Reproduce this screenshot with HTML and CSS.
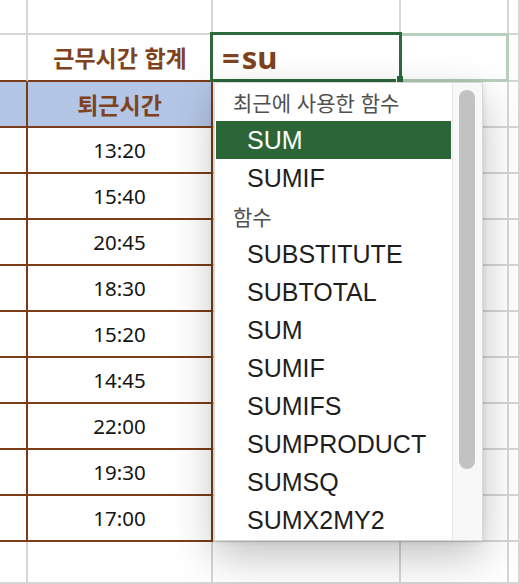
FILE: index.html
```html
<!DOCTYPE html>
<html lang="ko">
<head>
<meta charset="utf-8">
<title>근무시간 합계</title>
<link rel="stylesheet" href="styles.css">
</head>
<body>
<div class="sheet">
  <div class="grid">
    <div class="c"></div><div class="c"></div><div class="c"></div><div class="c"></div><div class="c"></div>

    <div class="c bb"></div><div class="c bb label">근무시간 합계</div><div class="c formula"><span class="eq">=</span>su</div><div class="c"></div><div class="c"></div>

    <div class="c t hd"></div><div class="c t hd">퇴근시간</div><div class="c"></div><div class="c"></div><div class="c"></div>

    <div class="c t"></div><div class="c t time">13:20</div><div class="c"></div><div class="c"></div><div class="c"></div>
    <div class="c t"></div><div class="c t time">15:40</div><div class="c"></div><div class="c"></div><div class="c"></div>
    <div class="c t"></div><div class="c t time">20:45</div><div class="c"></div><div class="c"></div><div class="c"></div>
    <div class="c t"></div><div class="c t time">18:30</div><div class="c"></div><div class="c"></div><div class="c"></div>
    <div class="c t"></div><div class="c t time">15:20</div><div class="c"></div><div class="c"></div><div class="c"></div>
    <div class="c t"></div><div class="c t time">14:45</div><div class="c"></div><div class="c"></div><div class="c"></div>
    <div class="c t"></div><div class="c t time">22:00</div><div class="c"></div><div class="c"></div><div class="c"></div>
    <div class="c t"></div><div class="c t time">19:30</div><div class="c"></div><div class="c"></div><div class="c"></div>
    <div class="c t"></div><div class="c t time">17:00</div><div class="c"></div><div class="c"></div><div class="c"></div>

    <div class="c"></div><div class="c"></div><div class="c"></div><div class="c"></div><div class="c"></div>
  </div>

  <div class="sel-ext"></div>
  <div class="sel"></div>
  <div class="handle"></div>

  <div class="dropdown">
    <ul class="list">
      <li class="grp">최근에 사용한 함수</li>
      <li class="item active">SUM</li>
      <li class="item">SUMIF</li>
      <li class="grp">함수</li>
      <li class="item">SUBSTITUTE</li>
      <li class="item">SUBTOTAL</li>
      <li class="item">SUM</li>
      <li class="item">SUMIF</li>
      <li class="item">SUMIFS</li>
      <li class="item">SUMPRODUCT</li>
      <li class="item">SUMSQ</li>
      <li class="item">SUMX2MY2</li>
    </ul>
    <div class="track"><div class="thumb"></div></div>
  </div>
</div>
</body>
</html>
```

FILE: styles.css
```css
* { box-sizing: border-box; }

html, body {
  margin: 0;
  padding: 0;
  background: #ffffff;
}

.sheet {
  position: relative;
  width: 520px;
  height: 584px;
  overflow: hidden;
  background: #ffffff;
}

.grid {
  display: grid;
  grid-template-columns: 28px 185px 188px 108px 11px;
  grid-template-rows: 35px 47px repeat(10, 46px) 42px;
}

.c {
  border-right: 2px solid #d6d6d6;
  border-bottom: 2px solid #d6d6d6;
  display: flex;
  align-items: center;
  justify-content: center;
  font-family: "Noto Sans", "Noto Sans CJK KR", sans-serif;
}

.bb { border-bottom-color: #7a3d17; }

.t {
  border-right-color: #7a3d17;
  border-bottom-color: #7a3d17;
}

.hd {
  background: #b4c6e6;
  color: #7f4220;
  font-family: "Noto Sans CJK KR", sans-serif;
  font-weight: 700;
  font-size: 23px;
  line-height: 1;
}

.label {
  color: #7f4220;
  font-family: "Noto Sans CJK KR", sans-serif;
  font-weight: 700;
  font-size: 23px;
  line-height: 1;
  padding-left: 1px;
}

.formula {
  justify-content: flex-start;
  align-items: flex-end;
  padding: 0 0 7px 9px;
  color: #7f4220;
  font-family: "Noto Sans", sans-serif;
  font-weight: 700;
  font-size: 31px;
  line-height: 1;
}

.eq { margin-right: 2px; }

.time {
  color: #141414;
  font-size: 20.5px;
  line-height: 1;
}

.sel {
  position: absolute;
  left: 210px;
  top: 32px;
  width: 192px;
  height: 50px;
  border: 3px solid #2e6a3d;
}

.sel-ext {
  position: absolute;
  left: 402px;
  top: 33px;
  width: 107px;
  height: 49px;
  border: 3px solid #b9cfbd;
  border-left: 0;
}

.handle {
  position: absolute;
  left: 397px;
  top: 76px;
  width: 6px;
  height: 6px;
  background: #2e6a3d;
  box-shadow: -1px 0 0 #ffffff;
}

.dropdown {
  position: absolute;
  left: 214px;
  top: 82px;
  width: 269px;
  height: 459px;
  background: #ffffff;
  border: 1px solid #d9d9d9;
  display: flex;
  box-shadow: 0 16px 40px rgba(0, 0, 0, 0.24), 0 0 6px rgba(0, 0, 0, 0.12);
}

.list {
  list-style: none;
  margin: 0;
  padding: 0;
  flex: 1;
}

.list li {
  height: 38px;
  display: flex;
  align-items: center;
  white-space: nowrap;
}

.grp {
  padding-left: 18px;
  color: #505050;
  font-family: "Noto Sans CJK KR", sans-serif;
  font-size: 21px;
  line-height: 1;
}

.item {
  padding-left: 32px;
  color: #1e1e1e;
  font-family: "Liberation Sans", Arial, sans-serif;
  font-size: 25px;
  line-height: 1;
}

.item.active {
  background: #2c6637;
  color: #ffffff;
  margin: 0 1px;
  padding-left: 31px;
}

.track {
  width: 30px;
  border-left: 1px solid #e6e6e6;
  background: #f8f8f8;
  padding: 7px 0 0 6px;
}

.thumb {
  width: 16px;
  height: 379px;
  border-radius: 8px;
  background: #c2c2c2;
}
```
